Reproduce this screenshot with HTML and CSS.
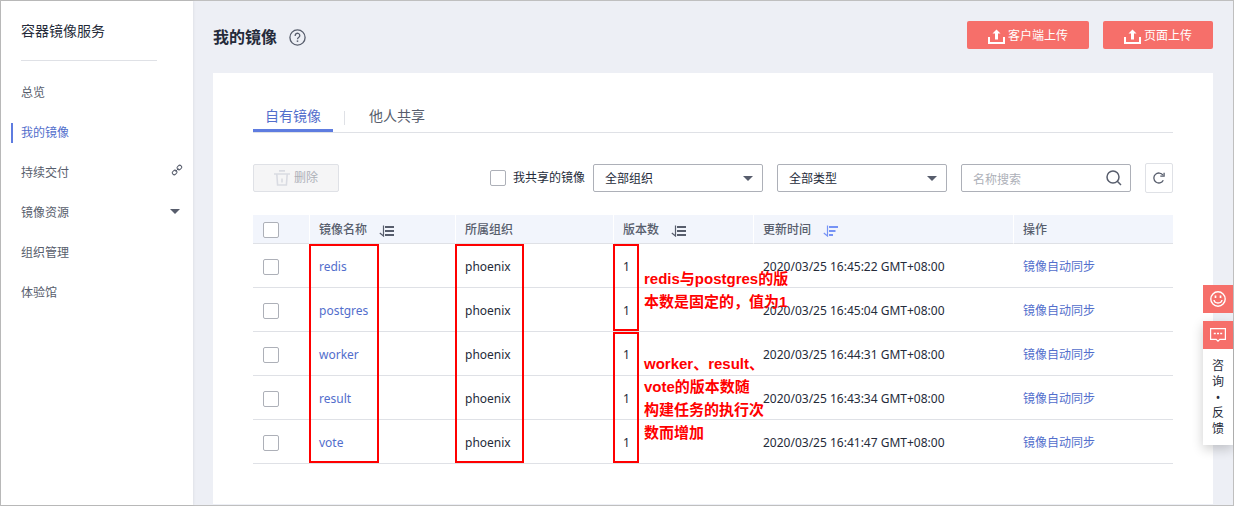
FILE: index.html
```html
<!DOCTYPE html>
<html lang="zh-CN">
<head>
<meta charset="utf-8">
<title>容器镜像服务</title>
<link rel="stylesheet" href="styles.css">
</head>
<body>
<svg class="defs" aria-hidden="true">
  <symbol id="upload" viewBox="0 0 17 15"><path d="M1 8v6h15V8" fill="none" stroke="currentColor" stroke-width="2"/><path d="M8.500 0.500L12.500 4.500H10v6H7v-6H4.500z" fill="currentColor"/></symbol>
  <symbol id="sort" viewBox="0 0 15 12"><path d="M4.500 0.500v10.500L0.800 8" fill="none" stroke="currentColor" stroke-width="1.200"/><path d="M6 2h9M6 6h9M6 10h9" stroke="currentColor" stroke-width="1.800"/></symbol>
  <symbol id="sort-desc" viewBox="0 0 15 12"><path d="M4.500 0.500v10.500L0.800 8" fill="none" stroke="currentColor" stroke-width="1.200"/><path d="M6 2h9M6 6h6.500M6 10h4" stroke="currentColor" stroke-width="1.800"/></symbol>
</svg>
<div class="page">
  <aside class="sidebar">
    <h2 class="service">容器镜像服务</h2>
    <nav class="nav">
      <a class="nav-item" href="#">总览</a>
      <a class="nav-item active" href="#">我的镜像</a>
      <a class="nav-item" href="#">持续交付
        <svg class="link-icon" width="12" height="12" viewBox="0 0 12 12" fill="none" stroke="currentColor" stroke-width="1"><rect x="6" y="1.600" width="4.800" height="3.800" rx="1.900" transform="rotate(-45 8.400 3.500)"/><rect x="1.200" y="6.600" width="4.800" height="3.800" rx="1.900" transform="rotate(-45 3.600 8.500)"/><path d="M4.600 7.500l2.800-3"/></svg>
      </a>
      <a class="nav-item" href="#">镜像资源 <span class="caret"></span></a>
      <a class="nav-item" href="#">组织管理</a>
      <a class="nav-item" href="#">体验馆</a>
    </nav>
  </aside>
  <main class="main">
    <header class="head">
      <h1 class="title">我的镜像</h1>
      <svg class="help" width="17" height="17" viewBox="0 0 17 17" fill="none" stroke="currentColor" stroke-width="1.300"><circle cx="8.500" cy="8.500" r="7.600"/><path d="M6.200 7V6.600a2.300 2.200 0 1 1 3.600 1.700c-.9.600-1.300 1-1.300 2"/><path d="M8.500 11.400v1.500" stroke-width="1.500"/></svg>
      <div class="actions">
        <button class="primary"><svg width="17" height="15"><use href="#upload"/></svg>客户端上传</button>
        <button class="primary"><svg width="17" height="15"><use href="#upload"/></svg>页面上传</button>
      </div>
    </header>
    <section class="card">
      <div class="tabs">
        <a class="tab current" href="#">自有镜像</a>
        <span class="tab-split"></span>
        <a class="tab" href="#">他人共享</a>
      </div>
      <div class="toolbar">
        <button class="delete" disabled><svg width="16" height="16" viewBox="0 0 16 16" fill="none" stroke="currentColor" stroke-width="1.600"><path d="M5 0.900h6M0 4h16M2.800 4l.8 11h8.800l.8-11M8 8.500v4"/></svg>删除</button>
        <div class="filters">
          <label class="shared"><input class="check" type="checkbox"><span>我共享的镜像</span></label>
          <span class="select-wrap"><select class="field" aria-label="组织"><option>全部组织</option></select><span class="caret"></span></span>
          <span class="select-wrap"><select class="field" aria-label="类型"><option>全部类型</option></select><span class="caret"></span></span>
          <span class="select-wrap"><input class="field" type="text" placeholder="名称搜索" aria-label="名称搜索"><svg class="search-icon" width="16" height="16" viewBox="0 0 16 16" fill="none" stroke="currentColor" stroke-width="1.500"><circle cx="7" cy="7" r="6"/><path d="M11.300 11.300L15 15"/></svg></span>
          <button class="refresh" aria-label="刷新"><svg width="12" height="12" viewBox="0 0 12 12" fill="none" stroke="currentColor" stroke-width="1.300"><path d="M10.300 8.300A5 5 0 1 1 10 3.200"/><path d="M7.300 4.200h3.800V0.700"/></svg></button>
        </div>
      </div>
      <div class="table-wrap">
        <table class="table">
          <colgroup><col class="c-check"><col class="c-name"><col class="c-org"><col class="c-ver"><col class="c-time"><col></colgroup>
          <thead><tr>
            <th><input class="check" type="checkbox" aria-label="全选"></th>
            <th>镜像名称<svg class="sort" width="15" height="12"><use href="#sort"/></svg></th>
            <th>所属组织</th>
            <th>版本数<svg class="sort" width="15" height="12"><use href="#sort"/></svg></th>
            <th>更新时间<svg class="sort on" width="15" height="12"><use href="#sort-desc"/></svg></th>
            <th>操作</th>
          </tr></thead>
          <tbody>
            <tr><td><input class="check" type="checkbox" aria-label="redis"></td><td><a href="#">redis</a></td><td>phoenix</td><td>1</td><td>2020/03/25 16:45:22 GMT+08:00</td><td><a href="#">镜像自动同步</a></td></tr>
            <tr><td><input class="check" type="checkbox" aria-label="postgres"></td><td><a href="#">postgres</a></td><td>phoenix</td><td>1</td><td>2020/03/25 16:45:04 GMT+08:00</td><td><a href="#">镜像自动同步</a></td></tr>
            <tr><td><input class="check" type="checkbox" aria-label="worker"></td><td><a href="#">worker</a></td><td>phoenix</td><td>1</td><td>2020/03/25 16:44:31 GMT+08:00</td><td><a href="#">镜像自动同步</a></td></tr>
            <tr><td><input class="check" type="checkbox" aria-label="result"></td><td><a href="#">result</a></td><td>phoenix</td><td>1</td><td>2020/03/25 16:43:34 GMT+08:00</td><td><a href="#">镜像自动同步</a></td></tr>
            <tr><td><input class="check" type="checkbox" aria-label="vote"></td><td><a href="#">vote</a></td><td>phoenix</td><td>1</td><td>2020/03/25 16:41:47 GMT+08:00</td><td><a href="#">镜像自动同步</a></td></tr>
          </tbody>
        </table>
        <div class="mark mark-name"></div>
        <div class="mark mark-org"></div>
        <div class="mark mark-fixed"></div>
        <div class="mark mark-built"></div>
        <p class="note note-fixed">redis与postgres的版<br>本数是固定的，值为1</p>
        <p class="note note-built">worker、result、<br>vote的版本数随<br>构建任务的执行次<br>数而增加</p>
      </div>
    </section>
  </main>
  <div class="float">
    <button class="float-btn" aria-label="评价"><svg width="16" height="16" viewBox="0 0 16 16" fill="none" stroke="currentColor" stroke-width="1.400"><circle cx="8" cy="8" r="7.200"/><path d="M4 9c.6 4 7.400 4 8 0"/><path d="M5.500 4.500v2.500M10.500 4.500v2.500" stroke-width="1.700"/></svg></button>
    <div class="feedback">
      <button class="float-btn" aria-label="反馈"><svg width="16" height="14" viewBox="0 0 16 14" fill="none" stroke="currentColor" stroke-width="1.200"><path d="M.6 .6h14.800v10.800H9.800L8 13.200 6.200 11.400H.6z"/><path d="M3.800 5.500h2M7 5.500h2M10.200 5.500h2" stroke-width="1.600"/></svg></button>
      <a class="feedback-text" href="#"><span>咨</span><span>询</span><span class="dot">•</span><span>反</span><span>馈</span></a>
    </div>
  </div>
</div>
</body>
</html>
```
FILE: styles.css
```css
* { box-sizing: border-box; }
body {
  margin: 0;
  font: 12px/18px "Noto Sans", "Noto Sans CJK SC", sans-serif;
  color: #252b3a;
}
a { color: #526ecc; text-decoration: none; }
button, input, select { font: inherit; color: inherit; margin: 0; }
svg { flex: none; }
.defs { position: absolute; width: 0; height: 0; }
.page {
  position: relative;
  display: flex;
  min-height: 100vh;
  border: 1px solid #bfbfbf;
  background: #edeff5;
}
.sidebar {
  flex: none;
  width: 192px;
  background: #fff;
  box-shadow: 0 0 3px rgba(0, 0, 0, .1);
}
.service {
  margin: 0 36px 12px 20px;
  padding: 20px 0 19px;
  border-bottom: 1px solid #dfe1e6;
  font-size: 14px;
  line-height: 20px;
  font-weight: 400;
}
.nav { display: flex; flex-direction: column; }
.nav-item {
  display: flex;
  align-items: center;
  justify-content: space-between;
  height: 20px;
  margin: 10px 10px;
  padding: 0 0 0 10px;
  color: #575d6c;
}
.nav-item .caret { margin: 0 3px 4px 0; }
.nav-item.active {
  color: #526ecc;
  border-left: 2px solid #5e7ce0;
  padding-left: 8px;
}
.link-icon { margin-bottom: 6px; }
.caret {
  border: 5px solid transparent;
  border-top-color: #575d6c;
  border-bottom: 0;
}
.main {
  flex: 1;
  display: flex;
  flex-direction: column;
  padding: 20px 20px 1px;
}
.head { display: flex; align-items: center; height: 28px; margin-bottom: 24px; }
.title { margin: 0 12px 0 0; padding-top: 4px; font-size: 16px; line-height: 24px; font-weight: 700; }
.help { margin-top: 4px; color: #575d6c; }
.actions { display: flex; gap: 14px; margin-left: auto; }
.primary {
  display: flex;
  align-items: center;
  gap: 3px;
  height: 28px;
  padding: 2px 21px 0;
  border: 0;
  border-radius: 2px;
  background: #f66f6a;
  color: #fff;
}
.card { flex: 1; padding: 30px 40px 0; background: #fff; }
.tabs {
  display: flex;
  align-items: center;
  height: 30px;
  border-bottom: 1px solid #dfe1e6;
  font-size: 14px;
}
.tab { height: 29px; padding: 0 12px; line-height: 26px; color: #575d6c; }
.tab.current { color: #526ecc; border-bottom: 3px solid #5e7ce0; }
.tab-split { width: 1px; height: 14px; margin: 0 12px 0 11px; background: #dfe1e6; }
.toolbar { display: flex; align-items: center; height: 30px; margin: 30px 0 22px; }
.delete {
  display: flex;
  align-items: center;
  gap: 4px;
  height: 28px;
  padding: 0 20px;
  border: 1px solid #dfe1e6;
  border-radius: 2px;
  background: #f5f5f6;
  color: #adb0b8;
}
.delete svg { color: #d9dbe2; }
.filters { display: flex; align-items: center; gap: 14px; margin-left: auto; }
.shared { display: flex; align-items: center; gap: 7px; margin-right: -6px; }
.check {
  display: block;
  appearance: none;
  width: 16px;
  height: 16px;
  border: 1px solid #adb0b8;
  border-radius: 2px;
  background: #fff;
}
.select-wrap { position: relative; display: block; width: 170px; }
.field {
  display: block;
  appearance: none;
  width: 100%;
  height: 28px;
  padding: 2px 11px 0;
  border: 1px solid #adb0b8;
  border-radius: 2px;
  background: #fff;
}
.field::placeholder { color: #adb0b8; }
.select-wrap .caret { position: absolute; right: 10px; top: 12px; pointer-events: none; }
.search-icon { position: absolute; right: 9px; top: 6px; color: #575d6c; }
.refresh {
  display: grid;
  place-items: center;
  width: 28px;
  height: 30px;
  padding: 0;
  border: 1px solid #dfe1e6;
  border-radius: 2px;
  background: #fff;
  color: #575d6c;
}
.table-wrap { position: relative; }
.table { width: 100%; table-layout: fixed; border-collapse: separate; border-spacing: 0; }
.c-check { width: 56px; }
.c-name { width: 146px; }
.c-org { width: 158px; }
.c-ver { width: 140px; }
.c-time { width: 260px; }
th, td { padding: 2px 10px 0; text-align: left; border-bottom: 1px solid #dfe1e6; }
th { height: 29px; background: #f2f5fc; color: #575d6c; font-weight: 500; }
th + th { border-left: 1px solid #fff; padding-left: 9px; }
td { height: 44px; }
.sort { margin-left: 12px; vertical-align: -3px; }
.sort.on { color: #7693f5; }
.mark { position: absolute; top: 29px; bottom: 1px; border: 2px solid #f00; }
.mark-name { left: 56px; width: 70px; }
.mark-org { left: 202px; width: 69px; }
.mark-fixed { left: 360px; width: 26px; height: 87px; }
.mark-built { left: 360px; width: 26px; top: 117px; }
.note {
  position: absolute;
  left: 391px;
  margin: 0;
  font: 700 15px/23px "Liberation Sans", "Noto Sans CJK SC", sans-serif;
  color: #f00;
  white-space: nowrap;
}
.note-fixed { top: 52px; }
.note-built { top: 137px; }
.float { position: absolute; top: 284px; right: 0; width: 30px; display: grid; gap: 8px; }
.float-btn {
  display: grid;
  place-items: center;
  width: 30px;
  height: 28px;
  padding: 0;
  border: 0;
  background: #f66f6a;
  color: #fff;
}
.feedback { background: #fff; box-shadow: 0 4px 12px rgba(0, 0, 0, .2); }
.feedback-text {
  display: flex;
  flex-direction: column;
  align-items: center;
  padding: 9px 0 8px;
  line-height: 16px;
  color: #252b3a;
}
.feedback-text .dot { line-height: 15px; }
```
